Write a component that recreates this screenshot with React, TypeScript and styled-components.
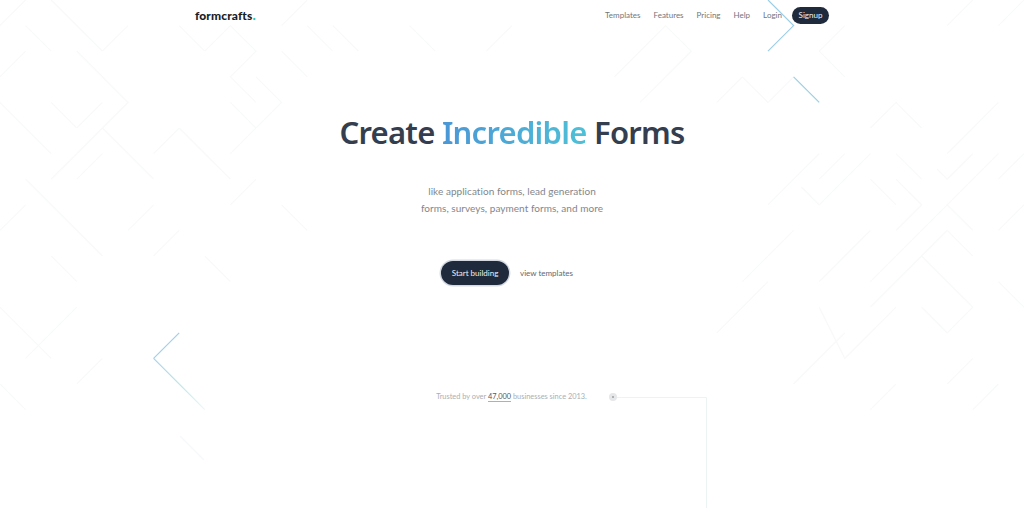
import * as React from 'react'
import styled, {createGlobalStyle} from 'styled-components'

const GlobalStyle = createGlobalStyle`
  html, body {
    margin: 0;
    padding: 0;
    background: #fff;
    font-family: Lato, "Liberation Sans", sans-serif;
  }
`

const Page = styled.div`
  position: relative;
  width: 1024px;
  height: 508px;
  overflow: hidden;
`

const Pattern = styled.svg`
  position: absolute;
  top: 0;
  left: 0;
  width: 1024px;
  height: 508px;
  fill: none;
`

const Content = styled.div`
  position: relative;
  display: flex;
  flex-direction: column;
  align-items: center;
`

const Nav = styled.nav`
  box-sizing: border-box;
  width: 100%;
  height: 30px;
  padding: 0 195px;
  display: flex;
  align-items: center;
  justify-content: space-between;
`

const Logo = styled.div`
  font-weight: 900;
  font-size: 12px;
  color: #1a1d24;
  letter-spacing: 0.12px;
  span {
    color: #2fc4ae;
    font-size: 14px;
    line-height: 0;
  }
`

const Menu = styled.div`
  display: flex;
  align-items: center;
  gap: 13px;
`

const MenuLink = styled.a`
  font-size: 8px;
  color: #71767c;
`

const Signup = styled.a`
  margin-left: -3px;
  width: 37px;
  height: 17px;
  border-radius: 9px;
  background: #1f2a3c;
  color: #f0f2f4;
  font-size: 8px;
  display: flex;
  align-items: center;
  justify-content: center;
`

const Title = styled.h1`
  margin: 80px 0 0;
  font-family: "Noto Sans", sans-serif;
  font-weight: 600;
  font-size: 31px;
  line-height: 44px;
  letter-spacing: -0.75px;
  color: #343e4e;
`

const Accent = styled.span`
  background: linear-gradient(90deg, #4a97d6, #4fc0d6);
  -webkit-background-clip: text;
  background-clip: text;
  color: transparent;
`

const Lead = styled.p`
  margin: 29px 0 0;
  font-size: 10px;
  font-weight: 400;
  line-height: 17px;
  letter-spacing: 0.05px;
  color: #82868b;
  text-align: center;
`

const Actions = styled.div`
  margin-top: 44px;
  display: flex;
  align-items: center;
  gap: 11px;
  margin-left: -10px;
`

const Primary = styled.a`
  width: 68px;
  height: 24px;
  border-radius: 12px;
  background: #1f2a3c;
  box-shadow: 0 0 0 1.5px #d5dae2;
  color: #eef0f2;
  font-size: 8px;
  display: flex;
  align-items: center;
  justify-content: center;
`

const Secondary = styled.a`
  font-size: 8px;
  color: #63686e;
`

const Trusted = styled.div`
  margin-top: 107px;
  margin-left: 29px;
  display: flex;
  align-items: center;
  gap: 22px;
  font-size: 7.4px;
  color: #aaafb3;
`

const Count = styled.span`
  color: #4f5a66;
  border-bottom: 1px solid #7fc4c8;
`

const Dot = styled.span`
  position: relative;
  width: 8px;
  height: 8px;
  border-radius: 50%;
  background: #e6e7e9;
  &::after {
    content: '';
    position: absolute;
    top: 3px;
    left: 3px;
    width: 2px;
    height: 2px;
    border-radius: 50%;
    background: #9a9ea3;
  }
`

const paleLines: number[][][] = [
  [[0, 3], [1, 2]], [[3, 2], [5, 4], [4, 5], [6, 7]], [[4, 5], [3, 6], [2, 7]], [[0, 4], [2, 6]],
  [[4, 2], [5, 1]], [[8, 2], [9, 1], [10, 2], [9, 3], [10, 4]], [[10, 3], [11, 4], [10, 5], [9, 6]],
  [[9, 4], [10, 5]], [[7, 5], [6, 6]], [[7, 5], [9, 7]], [[1, 0], [0, 1]], [[2, 0], [4, 2]],
  [[1, 1], [2, 2]], [[3, 5], [2, 4]], [[3, 5], [4, 4]], [[7, 1], [8, 2]], [[12, 1], [13, 2]],
  [[11, 2], [12, 3]], [[12, 0], [11, 1]], [[1, 7], [4, 10]], [[0, 9], [1, 8]], [[5, 9], [6, 8]],
  [[3, 7], [4, 6]], [[6, 10], [7, 9]], [[9, 8], [10, 7]],
  [[13, 1], [14, 2]], [[16, 1], [17, 2]], [[20, 1], [19, 2]],
  [[26, 1], [27, 2], [26, 3]], [[26, 3], [25, 4]], [[29, 3], [30, 4], [31, 3]], [[29, 3], [28, 4]],
  [[32, 2], [33, 1]], [[32, 2], [33, 3]], [[26, 1], [24, 3]],
  [[35, 4], [36, 5]], [[35, 4], [34, 5]], [[39, 4], [37, 6]], [[38, 6], [37, 7], [36.6, 6.6]],
  [[39, 6], [37, 8], [38, 9]], [[35, 7], [36, 8], [35, 9]], [[34, 7], [35, 8]], [[35, 6], [36, 7]],
  [[34, 6], [32, 8], [31.3, 7.3]], [[33, 6], [32, 7]], [[32, 6], [30, 8]], [[34, 9], [32, 11]],
  [[37, 8], [34, 11]], [[37, 9], [34, 12]], [[37, 9], [38, 10]], [[36, 10], [38, 12], [37, 13], [36, 12]],
  [[35, 12], [33, 14], [32, 12]], [[39, 11], [40, 12]], [[40, 8], [39, 9]], [[40, 6], [39, 7]],
  [[38, 14], [37, 15]], [[39, 15], [38, 16]], [[35, 15], [34, 16]], [[33, 13], [31, 15]],
  [[0, 12], [2, 14]], [[1, 14], [3, 12]], [[0, 15], [1, 16]],
  [[3, 15], [4, 14]], [[2, 10], [3, 11]], [[8, 10], [9, 11]], [[11, 8], [12, 9]],
  [[29, 11], [31, 9]], [[28, 13], [30, 11]], [[39, 1], [40, 0]], [[37, 1], [38, 0]],
]

const toPoints = (line: number[][]) => line.map(([x, y]) => `${x * 25.6},${y * 25.6}`).join(' ')

export default function App() {
  return (
    <Page>
      <GlobalStyle/>
      <Pattern viewBox="0 0 1024 508">
        <defs>
          <linearGradient id="fade" gradientUnits="userSpaceOnUse" x1="153.6" y1="358.4" x2="204.8" y2="409.6">
            <stop offset="0" stopColor="#a4cfe8"/>
            <stop offset="0.55" stopColor="#bfe6e8"/>
            <stop offset="1" stopColor="#eef8f6"/>
          </linearGradient>
        </defs>
        {paleLines.map((line, i) => (
          <polyline key={i} points={toPoints(line)} stroke="#f8f9f9" strokeWidth="1.2"/>
        ))}
        <polyline points="768,0 793.6,25.6 768,51.2" stroke="#9ccfe6" strokeWidth="1.2"/>
        <polyline points="793.6,76.8 819.2,102.4" stroke="#9ccfe0" strokeWidth="1.2"/>
        <polyline points="179.2,332.8 153.6,358.4" stroke="#a4cfe8" strokeWidth="1.2"/>
        <line x1="153.6" y1="358.4" x2="204.8" y2="409.6" stroke="url(#fade)" strokeWidth="1.2"/>
        <line x1="180" y1="436" x2="204" y2="460" stroke="#f4faf9" strokeWidth="1.2"/>
        <polyline points="612,397.5 706.5,397.5 706.5,508" stroke="#ebf3f3" strokeWidth="1"/>
      </Pattern>
      <Content>
        <Nav>
          <Logo>formcrafts<span>.</span></Logo>
          <Menu>
            <MenuLink>Templates</MenuLink>
            <MenuLink>Features</MenuLink>
            <MenuLink>Pricing</MenuLink>
            <MenuLink>Help</MenuLink>
            <MenuLink>Login</MenuLink>
            <Signup>Signup</Signup>
          </Menu>
        </Nav>
        <Title>Create <Accent>Incredible</Accent> Forms</Title>
        <Lead>like application forms, lead generation<br/>forms, surveys, payment forms, and more</Lead>
        <Actions>
          <Primary>Start building</Primary>
          <Secondary>view templates</Secondary>
        </Actions>
        <Trusted>
          <span>Trusted by over <Count>47,000</Count> businesses since 2013.</span>
          <Dot/>
        </Trusted>
      </Content>
    </Page>
  )
}
